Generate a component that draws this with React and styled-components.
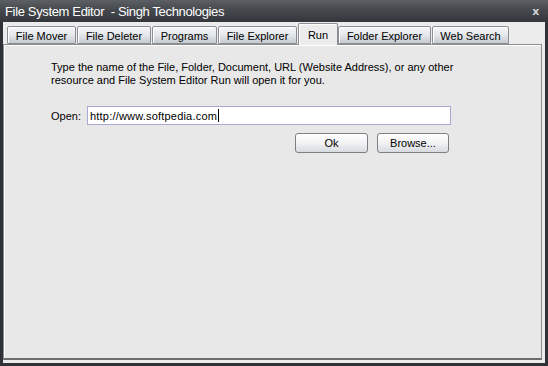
import styled, { createGlobalStyle } from "styled-components"

const GlobalStyle = createGlobalStyle`
  html, body {
    margin: 0;
    padding: 0;
    background: #2c2f33;
  }
  body {
    font-family: "Liberation Sans", Arial, sans-serif;
  }
`;

const Window = styled.div`
  width: 548px;
  height: 366px;
  display: flex;
  flex-direction: column;
  background: #2e3135;
  box-sizing: border-box;
`;

const TitleBar = styled.div`
  height: 22px;
  flex: none;
  display: flex;
  align-items: center;
  justify-content: space-between;
  padding: 0 9px 0 5px;
  background: linear-gradient(to bottom, #5c5f64 0%, #45484d 45%, #33363a 100%);
  color: #ffffff;
  font-size: 13px;
  letter-spacing: -0.35px;
`;

const CloseButton = styled.span`
  color: #cfd1d3;
  font-size: 11px;
  font-weight: bold;
  font-family: "DejaVu Sans", sans-serif;
  margin-top: 1px;
`;

const Client = styled.div`
  flex: 1;
  margin: 0 3px 3px 3px;
  background: #ececec;
  display: flex;
  flex-direction: column;
`;

const TabRow = styled.div`
  height: 22px;
  flex: none;
  display: flex;
  align-items: flex-end;
  padding-left: 4px;
  margin-right: 3px;
  position: relative;
  z-index: 1;
`;

const Tab = styled.div`
  box-sizing: border-box;
  width: ${({w}) => w}px;
  height: ${({active}) => active ? 22 : 18}px;
  margin-right: ${({gap}) => gap}px;
  margin-bottom: ${({active}) => active ? -1 : 0}px;
  display: flex;
  align-items: center;
  justify-content: center;
  font-size: 11px;
  color: #000;
  border: 1px solid #8b8e93;
  border-bottom: ${({active}) => active ? 'none' : '1px solid #8b8e93'};
  border-radius: 2px 2px 0 0;
  box-shadow: inset 1px 1px 0 #ffffff;
  background: ${({active}) => active
    ? '#ececec'
    : 'linear-gradient(to bottom, #f6f7f8 0%, #e4e7ea 50%, #c6cbd1 100%)'};
  padding-top: ${({active}) => active ? 0 : 1}px;
  white-space: nowrap;
`;

const Panel = styled.div`
  flex: 1;
  margin: 0 3px 3px 0;
  background: #e8e8e8;
  border: 1px solid #8a8d91;
  border-bottom: 2px solid #6a6d70;
  box-shadow: inset 1px 1px 0 #ffffff;
  padding: 16px 0 0 47px;
`;

const Form = styled.div`
  width: 400px;
  display: flex;
  flex-direction: column;
`;

const Description = styled.p`
  margin: 0;
  font-size: 11px;
  line-height: 13px;
  color: #000;
  white-space: nowrap;
`;

const OpenRow = styled.div`
  display: flex;
  align-items: center;
  margin-top: 19px;
`;

const Label = styled.span`
  font-size: 11px;
  width: 36px;
  flex: none;
`;

const Input = styled.div`
  flex: 1;
  height: 19px;
  box-sizing: border-box;
  border: 1px solid #a7abd4;
  background: #ffffff;
  display: flex;
  align-items: center;
  padding-left: 2px;
  font-size: 11px;
  letter-spacing: 0.2px;
  color: #000;
`;

const Caret = styled.span`
  width: 1px;
  height: 13px;
  background: #000;
  margin-left: 1px;
`;

const ButtonRow = styled.div`
  display: flex;
  justify-content: flex-end;
  gap: 9px;
  margin-top: 8px;
  padding-right: 2px;
`;

const Button = styled.div`
  width: ${({w}) => w}px;
  height: 20px;
  box-sizing: border-box;
  border: 1px solid #7d7f82;
  border-radius: 3px;
  background: linear-gradient(to bottom, #ffffff 0%, #f1f2f4 50%, #d7dbe0 100%);
  display: flex;
  align-items: center;
  justify-content: center;
  font-size: 11px;
  color: #000;
`;

const tabs = [
  { label: "File Mover", w: 69, gap: 1 },
  { label: "File Deleter", w: 74, gap: 1 },
  { label: "Programs", w: 65, gap: 1 },
  { label: "File Explorer", w: 79, gap: 1 },
  { label: "Run", w: 40, gap: 0, active: true },
  { label: "Folder Explorer", w: 93, gap: 1 },
  { label: "Web Search", w: 77, gap: 0 },
];

export default function App() {
  return (
    <>
      <GlobalStyle />
      <Window>
        <TitleBar>
          <span>File System Editor&nbsp; - Singh Technologies</span>
          <CloseButton>x</CloseButton>
        </TitleBar>
        <Client>
          <TabRow>
            {tabs.map((t) => (
              <Tab key={t.label} w={t.w} gap={t.gap} active={t.active}>
                {t.label}
              </Tab>
            ))}
          </TabRow>
          <Panel>
            <Form>
              <Description>
                Type the name of the File, Folder, Document, URL (Website Address), or any other
                <br />
                resource and File System Editor Run will open it for you.
              </Description>
              <OpenRow>
                <Label>Open:</Label>
                <Input>
                  http://www.softpedia.com
                  <Caret />
                </Input>
              </OpenRow>
              <ButtonRow>
                <Button w={73}>Ok</Button>
                <Button w={72}>Browse...</Button>
              </ButtonRow>
            </Form>
          </Panel>
        </Client>
      </Window>
    </>
  )
}
